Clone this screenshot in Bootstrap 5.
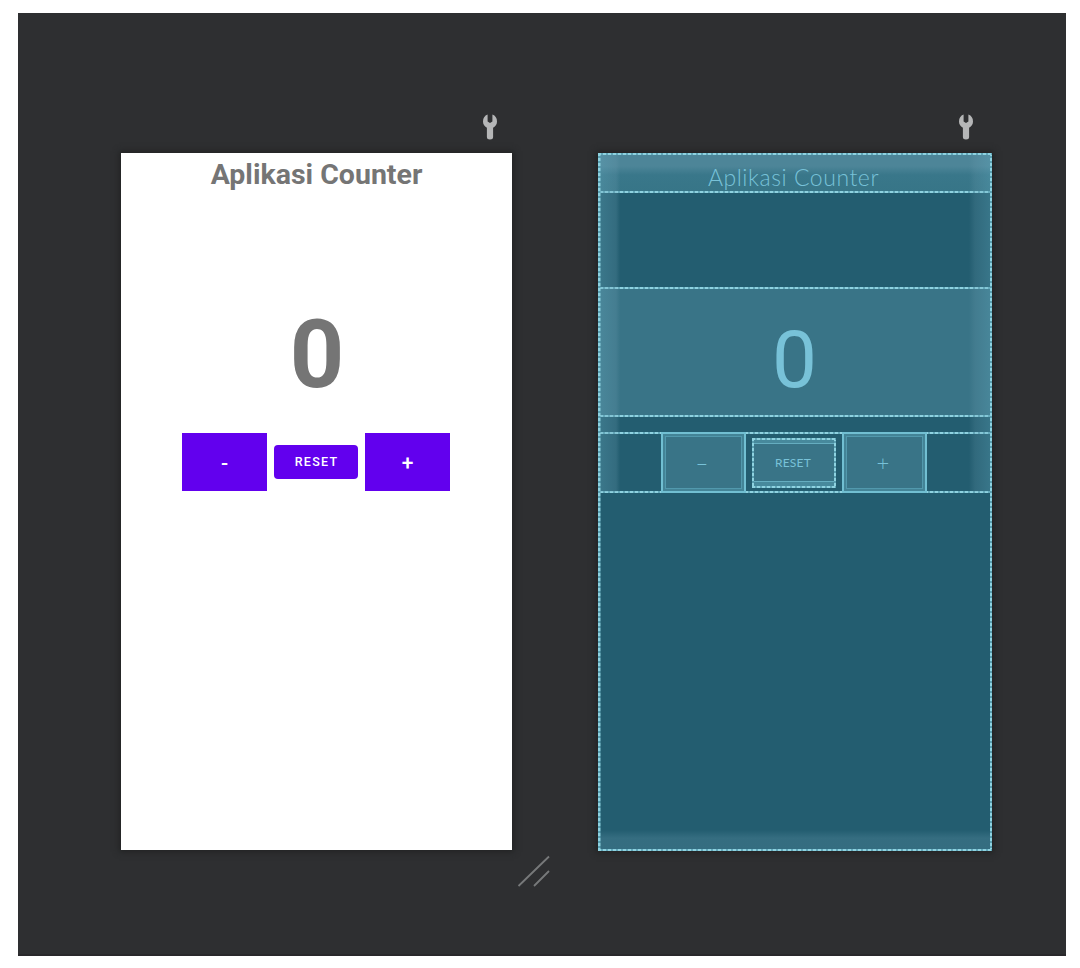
<!DOCTYPE html>
<html lang="id">
<head>
<meta charset="utf-8">
<meta name="viewport" content="width=device-width, initial-scale=1">
<title>Aplikasi Counter</title>
<link href="https://cdn.jsdelivr.net/npm/bootstrap@5.3.0/dist/css/bootstrap.min.css" rel="stylesheet">
<style>
:root{--dash-x:repeating-linear-gradient(90deg,#8ed2e0 0 3px,#62a8ba 3px 5px);--dash-y:repeating-linear-gradient(#8ed2e0 0 3px,#5a9fb1 3px 5px)}
body{width:1080px;height:968px;background:#fff;font-family:Roboto,sans-serif;padding:13px 14px 12px 18px;overflow:hidden}
.editor{background:#2e2f31;height:943px;padding:100px 74px 0 102.500px;border-bottom:2px solid #29282b}
.tools{height:40px}
.tools svg{display:block;width:16px;height:28px;margin-right:15px}
.blue .tools svg{margin-right:18px}
.design{width:392px}
.blue{width:394px}
.screen{height:697px;background:#fff;color:#757575;box-shadow:0 0 6px 2px #222324;margin-right:1px}
.title1{font-size:28.500px;line-height:34px;font-weight:700;padding:5px 0 0 1px;height:135px}
.zero1{font-size:95px;line-height:128px;font-weight:700;height:145px;padding:3px 0 0 2px}
.act{gap:7px}
.sq,.rs{background:#6200ee;color:#fff;width:84.500px;height:58px;line-height:1;font-weight:500;font-size:21px;padding-top:3px}
.rs{height:34px;border-radius:4px;font-size:12.500px;letter-spacing:1.250px;padding:1px 0 0 1px}
.plan{position:relative;height:698px;padding:2px;background:#235d70;color:#78c2d8;box-shadow:0 0 6px 2px #222324;font-family:Lato,sans-serif}
.plan::after{content:"";position:absolute;inset:0;background:var(--dash-x) top/100% 2px no-repeat,var(--dash-x) bottom/100% 2px no-repeat,var(--dash-y) left/2.500px 100% no-repeat,var(--dash-y) right/2.500px 100% no-repeat}
.edge{position:absolute;inset:2px;pointer-events:none;background:linear-gradient(90deg,rgba(105,170,190,.34),rgba(105,155,175,.24) 16px,transparent 20px,transparent 369px,rgba(105,155,175,.2) 375px,rgba(105,175,195,.3)) top/100% 337px no-repeat,linear-gradient(transparent,rgba(105,155,175,.26) 8px) bottom/100% 19px no-repeat}
.title2{height:38px;background:var(--dash-x) bottom/100% 2px no-repeat,linear-gradient(#4d8598 11px,#39778a 20px,#377587);font-weight:300;font-size:23px;line-height:44px;letter-spacing:.550px;padding-right:3px}
.zero2{height:130px;margin-top:94px;background:var(--dash-x) top/100% 2px no-repeat,var(--dash-x) bottom/100% 2px no-repeat,#397487;font-size:80px;line-height:146px;font-family:Roboto,sans-serif;padding-right:1px}
.act2{height:61px;margin-top:15px;gap:6px;padding:0 2px 0 0;background:var(--dash-x) top/100% 2px no-repeat,var(--dash-x) bottom/100% 2px no-repeat}
.box2{width:85px;background:#397487;border:2px solid #71bfd2;box-shadow:inset 0 0 0 2px #438497,inset 0 0 0 3px #5299ad;font-size:22px;font-weight:300;line-height:1;padding-right:3px}
.box2.rs2{width:84px;height:50px;border:0;font-size:12px;font-weight:400;letter-spacing:.250px;padding:0 2px 0 0;box-shadow:none;background:var(--dash-x) top/100% 2px no-repeat,var(--dash-x) bottom/100% 2px no-repeat,var(--dash-y) left/2px 100% no-repeat,var(--dash-y) right/2px 100% no-repeat,linear-gradient(#47899c 5px,#65adc0 5px 6px,#397487 6px 43px,#65adc0 43px 44px,#47899c 44px)}
.grip{position:absolute;left:517px;top:855px;width:34px;height:34px}
</style>
</head>
<body>
<main class="editor d-flex justify-content-between">
 <section class="design">
  <div class="tools d-flex justify-content-end"><svg viewBox="0 0 16 28"><path d="M5.600 1.500Q1 3.300 1 8.500q0 4 3.900 6.300V24q0 2.500 3.100 2.500t3.100-2.500V14.800Q15 12.500 15 8.500q0-5.200-4.600-7V8.500L8 10 5.600 8.500Z" fill="#b5b6b7"/></svg></div>
  <div class="screen text-center">
   <div class="title1">Aplikasi Counter</div>
   <div class="zero1">0</div>
   <div class="act d-flex justify-content-center align-items-center">
    <div class="sq d-flex justify-content-center align-items-center">-</div>
    <div class="rs d-flex justify-content-center align-items-center">RESET</div>
    <div class="sq d-flex justify-content-center align-items-center">+</div>
   </div>
  </div>
 </section>
 <section class="blue">
  <div class="tools d-flex justify-content-end"><svg viewBox="0 0 16 28"><path d="M5.600 1.500Q1 3.300 1 8.500q0 4 3.900 6.300V24q0 2.500 3.100 2.500t3.100-2.500V14.800Q15 12.500 15 8.500q0-5.200-4.600-7V8.500L8 10 5.600 8.500Z" fill="#b5b6b7"/></svg></div>
  <div class="plan text-center">
   <div class="title2">Aplikasi Counter</div>
   <div class="zero2">0</div>
   <div class="act2 d-flex justify-content-center align-items-center">
    <div class="box2 align-self-stretch d-flex justify-content-center align-items-center">–</div>
    <div class="box2 rs2 d-flex justify-content-center align-items-center">RESET</div>
    <div class="box2 align-self-stretch d-flex justify-content-center align-items-center">+</div>
   </div>
   <div class="edge"></div>
  </div>
 </section>
</main>
<svg class="grip" viewBox="0 0 34 34"><path d="M1.500 31 32 1.500M17 31 32 16" fill="none" stroke="#77797a" stroke-width="1.800"/></svg>
<script src="https://cdn.jsdelivr.net/npm/bootstrap@5.3.0/dist/js/bootstrap.bundle.min.js"></script>
</body>
</html>
